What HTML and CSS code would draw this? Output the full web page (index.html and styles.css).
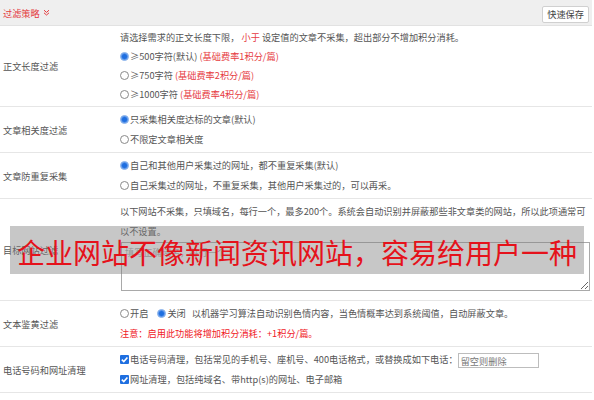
FILE: index.html
```html
<!DOCTYPE html>
<html lang="zh-CN">
<head>
<meta charset="utf-8">
<title>过滤策略</title>
<link rel="stylesheet" href="styles.css">
</head>
<body>
<div class="page">
  <div class="head">
    <span class="title">过滤策略<svg class="chev" width="7" height="7" viewBox="0 0 7 7"><path d="M1 1.2 L3.5 3.4 L6 1.2 M1 3.8 L3.5 6 L6 3.8" fill="none" stroke="#e4393c" stroke-width="1"/></svg></span>
    <button class="btn">快速保存</button>
  </div>

  <div class="row">
    <div class="label">正文长度过滤</div>
    <div class="content tight">
      <div>请选择需求的正文长度下限， <span class="red">小于</span> 设定值的文章不采集，超出部分不增加积分消耗。</div>
      <div><span class="radio on"></span>≥500字符(默认) <span class="red">(基础费率1积分/篇)</span></div>
      <div><span class="radio"></span>≥750字符 <span class="red">(基础费率2积分/篇)</span></div>
      <div><span class="radio"></span>≥1000字符 <span class="red">(基础费率4积分/篇)</span></div>
    </div>
  </div>

  <div class="row">
    <div class="label">文章相关度过滤</div>
    <div class="content">
      <div><span class="radio on"></span>只采集相关度达标的文章(默认)</div>
      <div><span class="radio"></span>不限定文章相关度</div>
    </div>
  </div>

  <div class="row">
    <div class="label">文章防重复采集</div>
    <div class="content">
      <div><span class="radio on"></span>自己和其他用户采集过的网址，都不重复采集(默认)</div>
      <div><span class="radio"></span>自己采集过的网址，不重复采集，其他用户采集过的，可以再采。</div>
    </div>
  </div>

  <div class="row">
    <div class="label">目标网站过滤</div>
    <div class="content">
      <div>以下网站不采集，只填域名，每行一个，最多200个。系统会自动识别并屏蔽那些非文章类的网站，所以此项通常可<br>以不设置。</div>
      <textarea class="area" placeholder="填写正确域名，每行一个"></textarea>
    </div>
  </div>

  <div class="row">
    <div class="label">文本鉴黄过滤</div>
    <div class="content">
      <div><span class="radio"></span><span class="opt">开启</span><span class="radio on"></span><span class="opt2">关闭</span>以机器学习算法自动识别色情内容，当色情概率达到系统阈值，自动屏蔽文章。</div>
      <div class="warn">注意：启用此功能将增加积分消耗：+1积分/篇。</div>
    </div>
  </div>

  <div class="row">
    <div class="label">电话号码和网址清理</div>
    <div class="content">
      <div><span class="check"><svg width="9" height="9" viewBox="0 0 9 9"><path d="M1.8 4.6 L3.8 6.6 L7.4 2.4" fill="none" stroke="#fff" stroke-width="1.5"/></svg></span>电话号码清理，包括常见的手机号、座机号、400电话格式，或替换成如下电话：<input class="phone" type="text" placeholder="留空则删除"></div>
      <div><span class="check"><svg width="9" height="9" viewBox="0 0 9 9"><path d="M1.8 4.6 L3.8 6.6 L7.4 2.4" fill="none" stroke="#fff" stroke-width="1.5"/></svg></span>网址清理，包括纯域名、带http(s)的网址、电子邮箱</div>
    </div>
  </div>

  <div class="row">
    <div class="label">图片水印过滤</div>
    <div class="content">
      <div><span class="radio"></span><span class="opt">开启</span><span class="radio on"></span><span class="opt2">关闭</span>自动过滤 <span class="red">(基础费率+1积分/篇)</span> <span class="red">(限时免费)</span></div>
    </div>
  </div>

  <div class="overlay">企业网站不像新闻资讯网站，容易给用户一种</div>
</div>
</body>
</html>
```

FILE: styles.css
```css
html, body {
  margin: 0;
  padding: 0;
  background: #fff;
}

.page {
  position: relative;
  width: 592px;
  font-family: "Noto Sans CJK SC", "Noto Sans", sans-serif;
  font-size: 9.2px;
  color: #555;
}

.head {
  height: 25px;
  background: #efefef;
  border-bottom: 1px solid #e2e2e2;
  display: flex;
  align-items: center;
  justify-content: space-between;
  padding: 0 3px 0 3px;
}

.title {
  color: #e4393c;
  display: flex;
  align-items: center;
}

.chev {
  margin-left: 3px;
}

.btn {
  height: 17px;
  padding: 0 4px;
  margin-top: 4px;
  border: 1px solid #d0d0d0;
  border-radius: 2px;
  background: #fff;
  color: #444;
  font-family: inherit;
  font-size: 9.2px;
  line-height: 15px;
}

.row {
  display: flex;
  border-bottom: 1px solid #e6e6e6;
}

.label {
  width: 120px;
  box-sizing: border-box;
  padding-left: 3px;
  flex-shrink: 0;
  display: flex;
  align-items: center;
}

.content {
  flex: 1;
  padding: 3px 0;
  line-height: 19.5px;
}

.content.tight {
  padding: 2px 0;
  line-height: 19px;
}

.red {
  color: #e63b3f;
}

.warn {
  color: #f0201e;
}

.radio {
  display: inline-block;
  width: 9px;
  height: 9px;
  box-sizing: border-box;
  border: 1px solid #8a8a8a;
  border-radius: 50%;
  background: #fff;
  vertical-align: -1px;
  margin-right: 1px;
}

.radio.on {
  border-color: #9ec0ee;
  background: #1f6fe0;
  box-shadow: inset 0 0 0 1px #5b95ea;
}

.opt {
  margin-right: 9px;
}

.opt2 {
  margin-right: 6px;
}

.check {
  display: inline-block;
  width: 9px;
  height: 9px;
  background: #1f6fe0;
  border-radius: 1px;
  vertical-align: -1px;
  margin-right: 1px;
  line-height: 0;
}

.area {
  display: block;
  width: 469px;
  height: 49px;
  box-sizing: border-box;
  margin: 1px 0 6px 1px;
  border: 1px solid #a9a9a9;
  font-family: inherit;
  font-size: 9.2px;
  padding: 2px 3px;
}

.area::placeholder {
  color: #aaa;
}

.phone {
  width: 81px;
  height: 15px;
  box-sizing: border-box;
  border: 1px solid #bdbdbd;
  font-family: inherit;
  font-size: 9.2px;
  padding: 0 2px;
  margin: 0;
  vertical-align: middle;
}

.phone::placeholder {
  color: #777;
}

.overlay {
  position: absolute;
  left: 10px;
  top: 226px;
  width: 574px;
  height: 48px;
  box-sizing: border-box;
  padding: 4px 0 0 7px;
  background: rgba(128, 128, 128, 0.44);
  color: #e5121b;
  font-size: 28px;
  line-height: 44px;
  white-space: nowrap;
  overflow: hidden;
}
```
